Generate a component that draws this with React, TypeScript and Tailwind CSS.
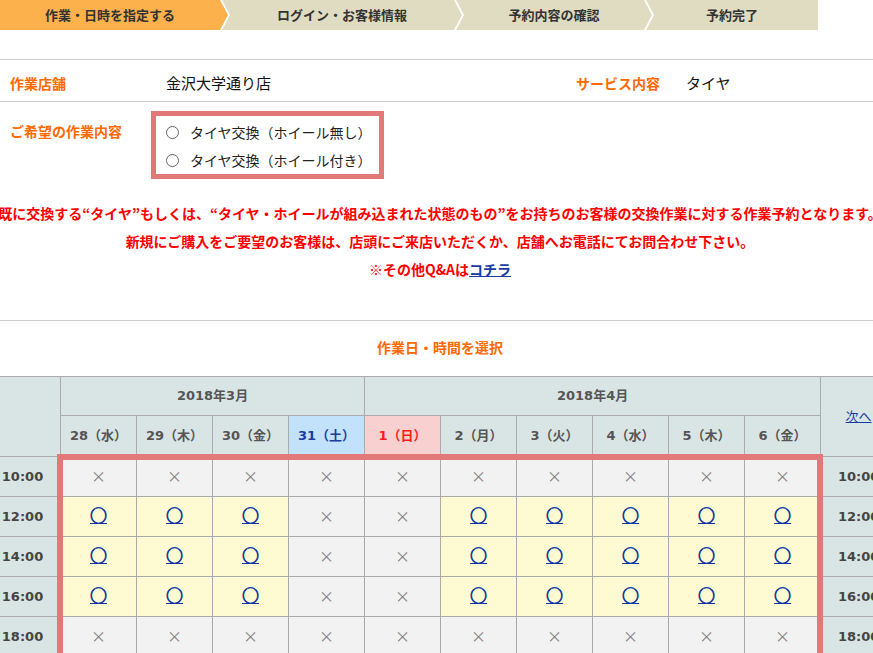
import React from 'react';

const jp = '[font-family:"Noto_Sans_CJK_JP",sans-serif]';
const num = '[font-family:"DejaVu_Sans","Noto_Sans_CJK_JP",sans-serif]';

const days = [
  { label: '28（水）', kind: 'normal' },
  { label: '29（木）', kind: 'normal' },
  { label: '30（金）', kind: 'normal' },
  { label: '31（土）', kind: 'sat' },
  { label: '1（日）', kind: 'sun' },
  { label: '2（月）', kind: 'normal' },
  { label: '3（火）', kind: 'normal' },
  { label: '4（水）', kind: 'normal' },
  { label: '5（木）', kind: 'normal' },
  { label: '6（金）', kind: 'normal' },
];

const open = [true, true, true, false, false, true, true, true, true, true];
const none = days.map(() => false);

const rows = [
  { time: '10:00', slots: none },
  { time: '12:00', slots: open },
  { time: '14:00', slots: open },
  { time: '16:00', slots: open },
  { time: '18:00', slots: none },
];

const StepBar: React.FC = () => {
  return (
    <div className="flex h-[30px] w-[818px] bg-white text-[13px] font-bold text-[#333]">
      <div className="flex w-[228px] items-center justify-center bg-[#fcb14d] pr-2 [clip-path:polygon(0_0,calc(100%_-_8px)_0,100%_50%,calc(100%_-_8px)_100%,0_100%)]">
        作業・日時を指定する
      </div>
      <div className="-ml-[6px] flex w-[240px] items-center justify-center bg-[#e0dcc1] [clip-path:polygon(0_0,calc(100%_-_8px)_0,100%_50%,calc(100%_-_8px)_100%,0_100%,8px_50%)]">
        ログイン・お客様情報
      </div>
      <div className="-ml-[6px] flex w-[196px] items-center justify-center bg-[#e0dcc1] [clip-path:polygon(0_0,calc(100%_-_8px)_0,100%_50%,calc(100%_-_8px)_100%,0_100%,8px_50%)]">
        予約内容の確認
      </div>
      <div className="-ml-[6px] flex w-[172px] items-center justify-center bg-[#e0dcc1] [clip-path:polygon(0_0,100%_0,100%_100%,0_100%,8px_50%)]">
        予約完了
      </div>
    </div>
  );
};

const Radio: React.FC<{ label: string }> = ({ label }) => (
  <label className="flex h-[28px] items-center gap-[11px]">
    <span className="h-[13px] w-[13px] rounded-full border border-[#666] bg-white" />
    <span className="text-[14px] text-[#222]">{label}</span>
  </label>
);

const Schedule: React.FC = () => {
  const head = 'border border-[#aaa] bg-[#d9e5e5] text-[13px] font-bold text-[#555]';
  return (
    <div className="relative -ml-[16px] w-[912px]">
      <table className={`w-[912px] table-fixed border-collapse ${num}`}>
        <colgroup>
          {Array.from({ length: 12 }).map((_, i) => (
            <col key={i} className="w-[76px]" />
          ))}
        </colgroup>
        <thead>
          <tr className="h-[39px]">
            <th rowSpan={2} className={head}></th>
            <th colSpan={4} className={head}>2018年3月</th>
            <th colSpan={6} className={head}>2018年4月</th>
            <th rowSpan={2} className={`${head} font-normal`}>
              <a href="#" className="text-[13px] font-normal text-[#1a3ca0] underline">次へ</a>
            </th>
          </tr>
          <tr className="h-[41px]">
            {days.map((d) => (
              <th
                key={d.label}
                className={`border border-[#aaa] text-[13px] font-bold ${
                  d.kind === 'sat'
                    ? 'bg-[#c2e1fb] text-[#1a3ca0]'
                    : d.kind === 'sun'
                    ? 'bg-[#f9d0d0] text-[#ff1a1a]'
                    : 'bg-[#d9e5e5] text-[#555]'
                }`}
              >
                {d.label}
              </th>
            ))}
          </tr>
        </thead>
        <tbody>
          {rows.map((r) => (
            <tr key={r.time} className="h-[40px]">
              <td className="border border-[#aaa] bg-[#d9e5e5] text-center text-[13px] font-bold text-[#444]">{r.time}</td>
              {r.slots.map((ok, i) =>
                ok ? (
                  <td key={i} className="border border-[#aaa] bg-[#fefad1] text-center">
                    <a href="#" className={`text-[17px] font-bold leading-none text-[#0f35a8] underline [-webkit-text-stroke:0.7px_#0f35a8] ${jp}`}>○</a>
                  </td>
                ) : (
                  <td key={i} className={`border border-[#aaa] bg-[#f2f2f2] text-center text-[15px] text-[#86807e] ${jp}`}>×</td>
                )
              )}
              <td className="border border-[#aaa] bg-[#d9e5e5] text-center text-[13px] font-bold text-[#444]">{r.time}</td>
            </tr>
          ))}
        </tbody>
      </table>
      <div className="pointer-events-none absolute left-[73px] top-[78px] h-[300px] w-[766px] border-[6px] border-[#e27878]" />
    </div>
  );
};

export default function App() {
  return (
    <div className={`h-[653px] w-[873px] overflow-hidden bg-white ${jp}`}>
      <div className="w-[880px]">
        <StepBar />

        <div className="mt-[29px] flex h-[43px] items-center border-y border-[#ccc] pt-[5px]">
          <span className="w-[166px] pl-[10px] text-[14px] font-bold text-[#ff6a00]">作業店舗</span>
          <span className="w-[410px] text-[15px] text-[#111]">金沢大学通り店</span>
          <span className="w-[110px] text-[14px] font-bold text-[#ff6a00]">サービス内容</span>
          <span className="text-[15px] text-[#111]">タイヤ</span>
        </div>

        <div className="flex pt-[9px]">
          <span className="mt-[10px] w-[151px] pl-[10px] text-[14px] leading-[20px] font-bold text-[#ff6a00]">ご希望の作業内容</span>
          <div className="flex h-[68px] w-[233px] flex-col border-[5px] border-[#e27878] pl-[10px] pt-[2px]">
            <Radio label="タイヤ交換（ホイール無し）" />
            <Radio label="タイヤ交換（ホイール付き）" />
          </div>
        </div>

        <div className="flex flex-col items-center pt-[20px] text-[14px] font-bold leading-[28px] text-[#ff0000]">
          <p className="whitespace-nowrap">既に交換する“タイヤ”もしくは、“タイヤ・ホイールが組み込まれた状態のもの”をお持ちのお客様の交換作業に対する作業予約となります。</p>
          <p className="whitespace-nowrap">新規にご購入をご要望のお客様は、店頭にご来店いただくか、店舗へお電話にてお問合わせ下さい。</p>
          <p className="whitespace-nowrap">
            ※その他Q&amp;Aは<a href="#" className="text-[#1a3ca0] underline">コチラ</a>
          </p>
        </div>

        <div className="mt-[37px] border-t border-[#ccc]" />

        <p className="pt-[16px] pb-[19px] text-center text-[14px] leading-[20px] font-bold text-[#ff6a00]">作業日・時間を選択</p>

        <Schedule />
      </div>
    </div>
  );
}
